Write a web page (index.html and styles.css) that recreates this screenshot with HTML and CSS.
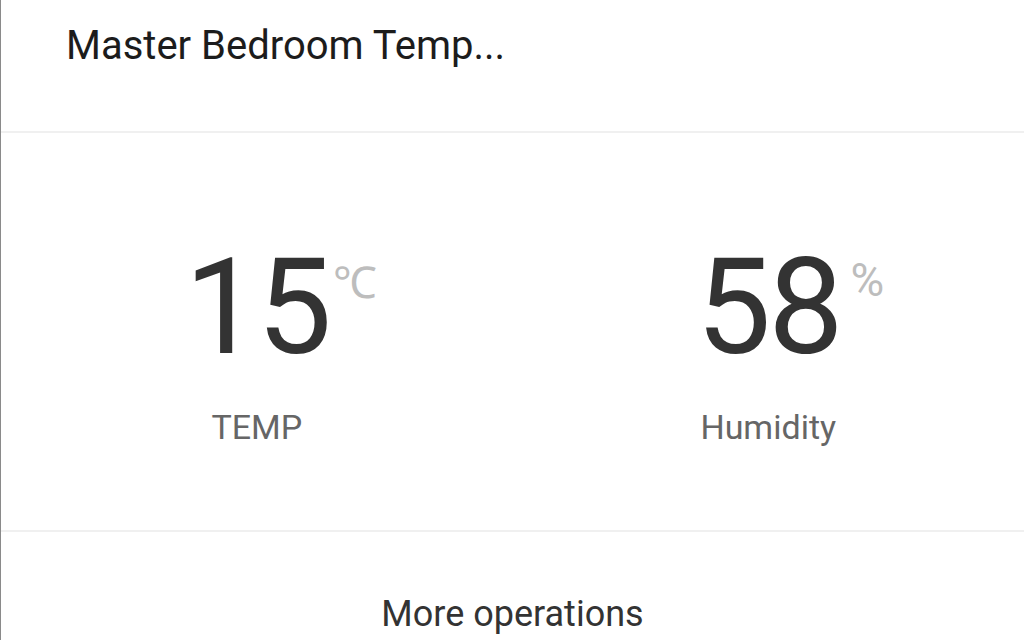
FILE: index.html
```html
<!DOCTYPE html>
<html>
<head>
<meta charset="utf-8">
<link rel="stylesheet" href="styles.css">
</head>
<body>
<div class="panel">
  <header class="header">
    <h1 class="title">Master Bedroom Temp...</h1>
  </header>
  <section class="readings">
    <div class="reading">
      <div class="value"><span class="num">15</span><span class="unit unit-c">℃</span></div>
      <div class="label">TEMP</div>
    </div>
    <div class="reading">
      <div class="value"><span class="num">58</span><span class="unit unit-p">%</span></div>
      <div class="label">Humidity</div>
    </div>
  </section>
  <footer class="more">More operations</footer>
</div>
</body>
</html>
```

FILE: styles.css
```css
html, body {
  margin: 0;
  padding: 0;
  background: #ffffff;
  height: 100%;
  overflow: hidden;
}
*, *::before, *::after {
  box-sizing: border-box;
}
body {
  font-family: Roboto, "Noto Sans", sans-serif;
}
.panel {
  height: 640px;
  border-left: 1px solid #8a8a8a;
  display: flex;
  flex-direction: column;
}
.header {
  flex-shrink: 0;
  height: 133px;
  padding: 25px 0 0 65px;
  border-bottom: 2px solid #f0f0f0;
}
.title {
  margin: 0;
  font-size: 40px;
  font-weight: 400;
  line-height: 42px;
  color: #1c1c1c;
}
.readings {
  flex-shrink: 0;
  height: 399px;
  display: grid;
  grid-template-columns: 1fr 1fr;
  border-bottom: 2px solid #f0f0f0;
  padding-top: 108px;
}
.reading {
  display: flex;
  flex-direction: column;
  align-items: center;
}
.value {
  position: relative;
  line-height: 134px;
  height: 134px;
}
.num {
  font-size: 134px;
  color: #333333;
  letter-spacing: -3px;
}
.unit {
  position: absolute;
  left: 100%;
  line-height: 1;
  color: #bdbdbd;
  white-space: nowrap;
}
.unit-c {
  top: 20px;
  font-size: 44px;
  margin-left: 4px;
}
.unit-p {
  top: 16px;
  font-size: 46px;
  margin-left: 10px;
}
.label {
  margin-top: 32px;
  font-size: 34px;
  line-height: 40px;
  color: #666666;
}
.more {
  flex: 1;
  text-align: center;
  font-size: 36px;
  color: #333333;
  padding-top: 62px;
  line-height: 40px;
}
```
